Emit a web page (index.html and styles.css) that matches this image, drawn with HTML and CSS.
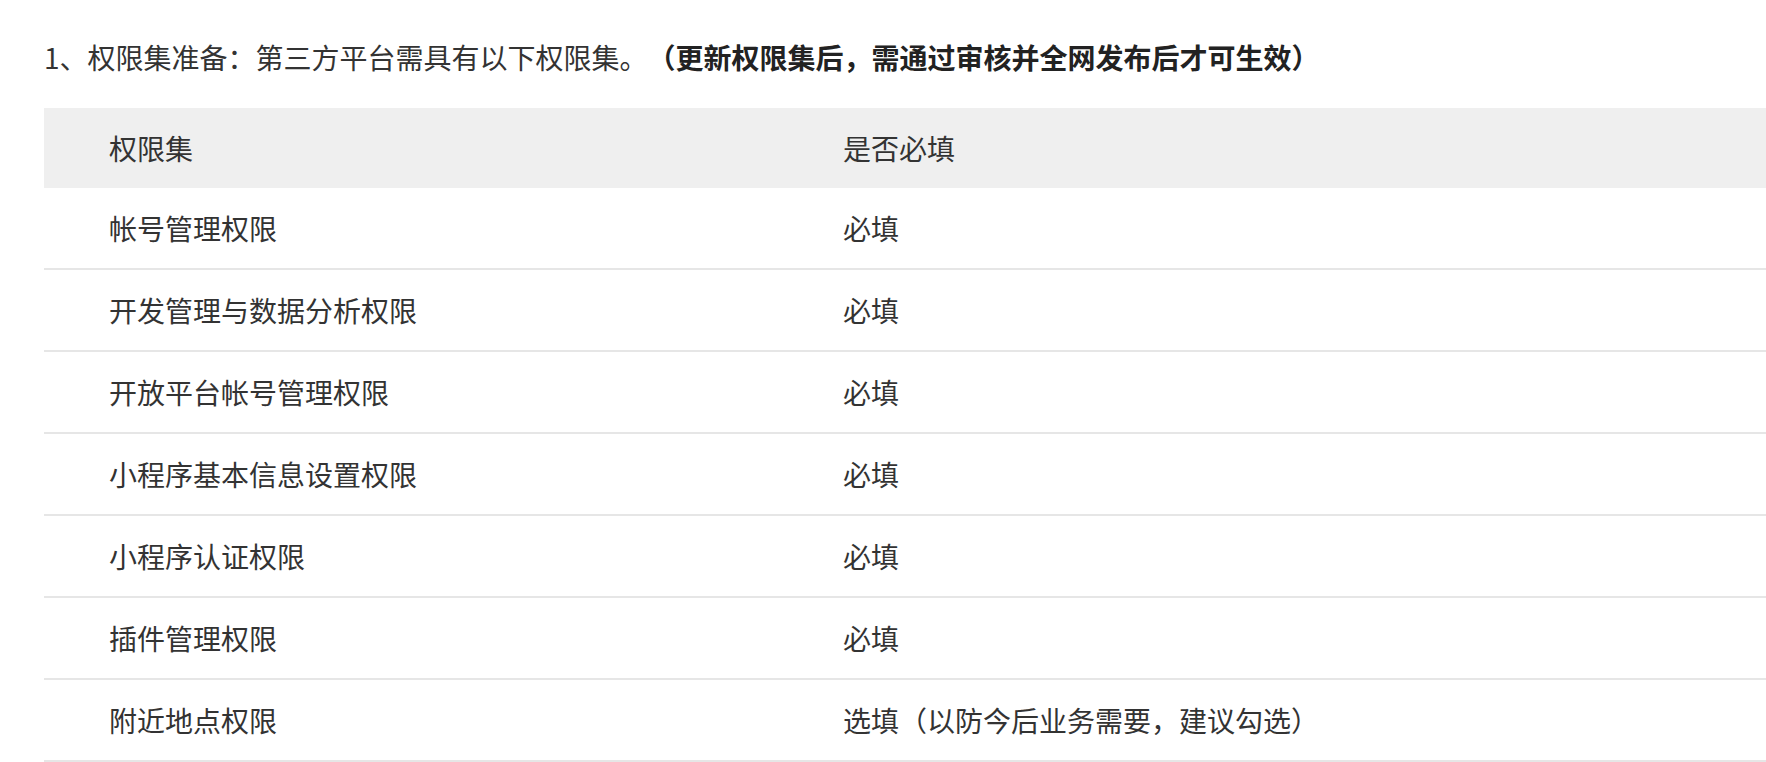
FILE: index.html
```html
<!DOCTYPE html>
<html lang="zh-CN">
<head>
    <meta charset="UTF-8">
    <meta name="viewport" content="width=device-width, initial-scale=1.0">
    <title>权限集准备</title>
    <link rel="stylesheet" href="styles.css">
</head>
<body>
    <div class="doc">
        <p class="step_title">1、权限集准备：第三方平台需具有以下权限集。<strong>（更新权限集后，需通过审核并全网发布后才可生效）</strong></p>
        <table class="perm_table">
            <thead>
                <tr>
                    <th class="col_name">权限集</th>
                    <th>是否必填</th>
                </tr>
            </thead>
            <tbody>
                <tr><td>帐号管理权限</td><td>必填</td></tr>
                <tr><td>开发管理与数据分析权限</td><td>必填</td></tr>
                <tr><td>开放平台帐号管理权限</td><td>必填</td></tr>
                <tr><td>小程序基本信息设置权限</td><td>必填</td></tr>
                <tr><td>小程序认证权限</td><td>必填</td></tr>
                <tr><td>插件管理权限</td><td>必填</td></tr>
                <tr><td>附近地点权限</td><td>选填（以防今后业务需要，建议勾选）</td></tr>
            </tbody>
        </table>
    </div>
</body>
</html>
```

FILE: styles.css
```css
body {
    margin: 0;
    padding: 0;
    background-color: #fff;
    color: #333;
    font-family: "Noto Sans CJK SC", "Noto Sans", sans-serif;
    overflow: hidden;
}

.doc {
    padding-left: 44px;
}

.step_title {
    font-size: 28px;
    line-height: 48px;
    margin: 33px 0 27px 0;
    white-space: nowrap;
    text-spacing-trim: space-all;
}

.step_title strong {
    font-weight: 700;
    color: #222;
}

.perm_table {
    width: 1722px;
    border-collapse: collapse;
    font-size: 28px;
    table-layout: fixed;
    text-spacing-trim: space-all;
}

.perm_table th {
    background-color: #efefef;
    font-weight: 400;
    text-align: left;
    height: 80px;
    padding: 0 0 0 65px;
}

.perm_table .col_name {
    width: 669px;
}

.perm_table td {
    height: 80px;
    padding: 0 0 0 65px;
    border-bottom: 2px solid #e6e6e6;
    white-space: nowrap;
}
```
